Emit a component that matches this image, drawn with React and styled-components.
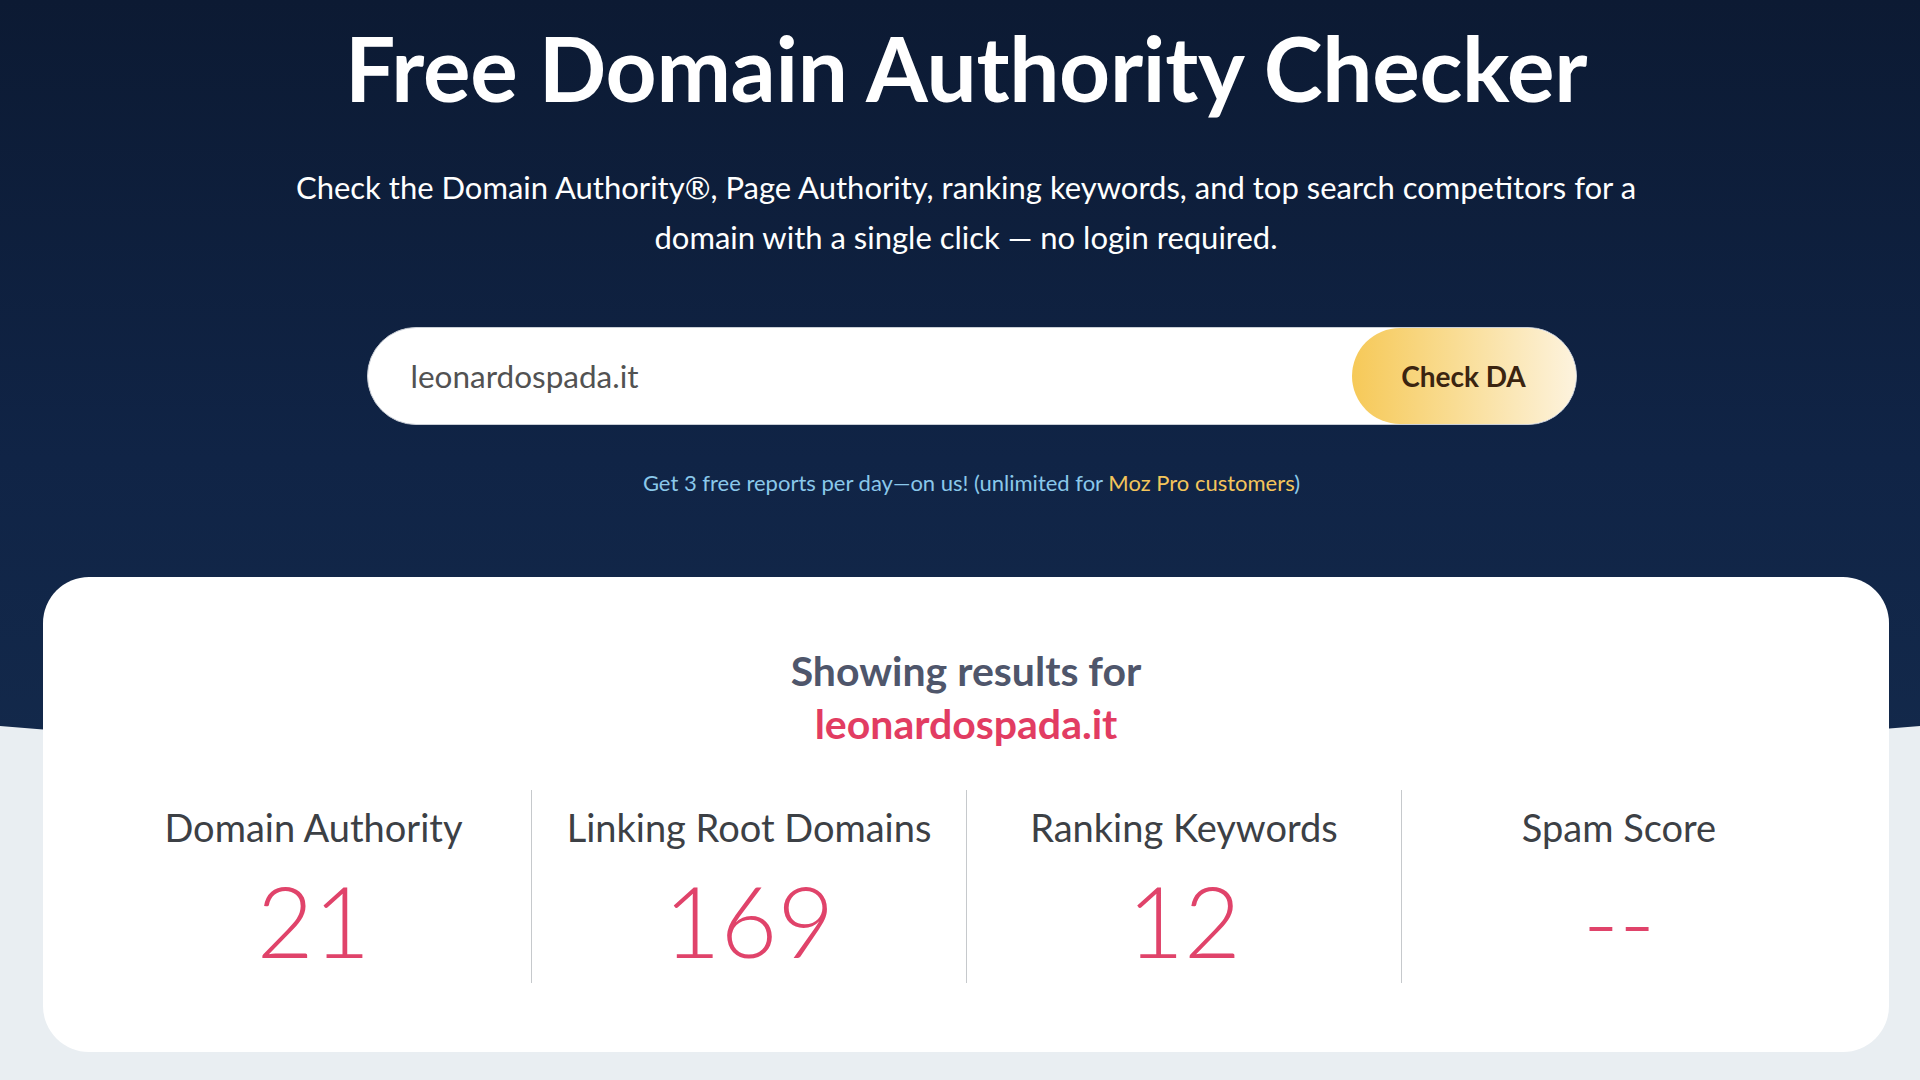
import styled, { createGlobalStyle } from 'styled-components'

const GlobalStyle = createGlobalStyle`
  html, body {
    margin: 0;
    padding: 0;
    background: #e9eef2;
    font-family: Lato, "Open Sans", sans-serif;
  }
  * { box-sizing: border-box; }
`

const Page = styled.div`
  min-height: 100vh;
  overflow: hidden;
`

// dark top band, its bottom edge is a very flat arc
const Hero = styled.header`
  background: linear-gradient(180deg, #0c1a33 0%, #102446 60%, #13294b 100%);
  clip-path: ellipse(3045px 765px at 50% 0);
  height: 765px;
  padding: 15px 31px 0 43px;
  display: flex;
  flex-direction: column;
  align-items: center;
  color: #fff;
`

const Title = styled.h1`
  margin: 0;
  font-size: 89px;
  line-height: 1.2;
  font-weight: 700;
  letter-spacing: -0.3px;
`

const Lead = styled.p`
  margin: 40px 0 0;
  max-width: 1390px;
  text-align: center;
  font-size: 31px;
  line-height: 50px;
  font-weight: 400;
`

const SearchBar = styled.form`
  margin: 65px 0 0 11px;
  width: 1210px;
  height: 98px;
  display: flex;
  background: #fff;
  border: 1px solid #c9ced6;
  border-radius: 49px;
  overflow: hidden;
`

const DomainInput = styled.input`
  flex: 1;
  border: 0;
  outline: 0;
  background: transparent;
  padding: 0 0 0 43px;
  font-family: inherit;
  font-size: 31.5px;
  color: #525252;
`

const CheckButton = styled.button`
  width: 224px;
  border: 0;
  border-radius: 49px;
  background: linear-gradient(90deg, #f6c958 0%, #f9dc92 45%, #fdf3de 100%);
  font-family: inherit;
  font-size: 28px;
  font-weight: 700;
  color: #3b2410;
  cursor: pointer;
`

const Note = styled.p`
  margin: 42px 0 0 11px;
  font-size: 22px;
  line-height: 32px;
  color: #8ac8ea;
`

const Highlight = styled.span`
  color: #f4c55b;
`

const Card = styled.section`
  margin: -188px 31px 0 43px;
  position: relative;
  background: #fff;
  border-radius: 46px;
  padding: 67px 53px 69px;
`

const Heading = styled.h2`
  margin: 0;
  text-align: center;
  font-size: 41px;
  line-height: 53px;
  font-weight: 700;
  color: #4f566b;
`

const Domain = styled.span`
  display: block;
  color: #e23c62;
`

const Metrics = styled.div`
  margin-top: 40px;
  display: grid;
  grid-template-columns: repeat(4, 1fr);
`

const Metric = styled.div`
  padding: 14px 0 8px;
  text-align: center;
  border-left: ${p => (p.$first ? '0' : '1px solid #c6c9cc')};
`

const Label = styled.div`
  font-size: 38px;
  line-height: 46px;
  color: #3c4045;
`

const Value = styled.div`
  margin-top: 15px;
  font-size: 98px;
  line-height: 110px;
  font-weight: 300;
  color: #e0436a;
`

const metrics = [
  { label: 'Domain Authority', value: '21' },
  { label: 'Linking Root Domains', value: '169' },
  { label: 'Ranking Keywords', value: '12' },
  { label: 'Spam Score', value: '--' },
]

export default function App() {
  return (
    <Page>
      <GlobalStyle />
      <Hero>
        <Title>Free Domain Authority Checker</Title>
        <Lead>
          Check the Domain Authority®, Page Authority, ranking keywords, and top search competitors for a
          domain with a single click — no login required.
        </Lead>
        <SearchBar onSubmit={e => e.preventDefault()}>
          <DomainInput defaultValue="leonardospada.it" />
          <CheckButton type="submit">Check DA</CheckButton>
        </SearchBar>
        <Note>
          Get 3 free reports per day—on us! (unlimited for <Highlight>Moz Pro customers</Highlight>)
        </Note>
      </Hero>
      <Card>
        <Heading>
          Showing results for
          <Domain>leonardospada.it</Domain>
        </Heading>
        <Metrics>
          {metrics.map((m, i) => (
            <Metric key={m.label} $first={i === 0}>
              <Label>{m.label}</Label>
              <Value>{m.value}</Value>
            </Metric>
          ))}
        </Metrics>
      </Card>
    </Page>
  )
}
